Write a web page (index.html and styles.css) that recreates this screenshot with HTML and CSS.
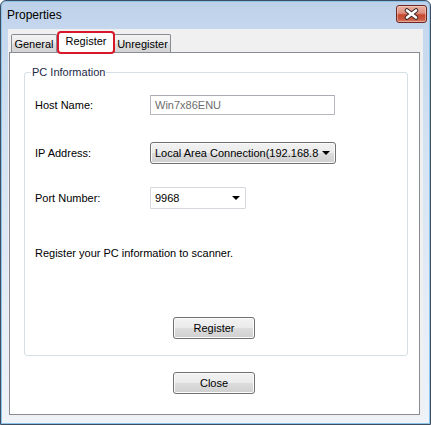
FILE: index.html
```html
<!DOCTYPE html>
<html>
<head>
<meta charset="utf-8">
<link rel="stylesheet" href="styles.css">
</head>
<body>
<div class="window">
  <div class="titlebar">
    <span class="title">Properties</span>
    <div class="close-x">
      <svg width="29" height="16" viewBox="0 0 29 16">
        <path d="M10 4.5 L19 11.5 M19 4.5 L10 11.5" stroke="#3b2a28" stroke-width="4.6" stroke-linecap="round" fill="none"/>
        <path d="M10 4.5 L19 11.5 M19 4.5 L10 11.5" stroke="#ffffff" stroke-width="2.6" stroke-linecap="round" fill="none"/>
      </svg>
    </div>
  </div>
  <div class="client">
    <div class="tabs">
      <div class="tab t-general">General</div>
      <div class="tab t-register active">Register</div>
      <div class="tab t-unregister">Unregister</div>
    </div>
    <div class="panel">
      <div class="group">
        <span class="legend">PC Information</span>
        <div class="row row-host">
          <span class="label">Host Name:</span>
          <div class="textbox">Win7x86ENU</div>
        </div>
        <div class="row row-ip">
          <span class="label">IP Address:</span>
          <div class="combo combo-ip"><span class="combo-text">Local Area Connection(192.168.8</span><span class="arrow"></span></div>
        </div>
        <div class="row row-port">
          <span class="label">Port Number:</span>
          <div class="combo combo-port"><span class="combo-text">9968</span><span class="arrow"></span></div>
        </div>
        <div class="message">Register your PC information to scanner.</div>
        <div class="btn btn-register">Register</div>
      </div>
      <div class="btn btn-close">Close</div>
    </div>
  </div>
</div>
</body>
</html>
```

FILE: styles.css
```css
html, body {
  margin: 0;
  padding: 0;
  background: #ffffff;
}
body {
  font-family: "Liberation Sans", Arial, sans-serif;
  font-size: 11px;
  color: #000;
}
.window {
  box-sizing: border-box;
  width: 431px;
  height: 425px;
  border: 1px solid #3e4d60;
  border-radius: 6px 6px 0 0;
  background: linear-gradient(180deg, #bcd0e9 0px, #c6d8ee 30px, #d6e3f2 160px, #e4ecf6 300px, #eef3f9 100%);
  box-shadow: inset 0 0 0 1px #8cc3ea;
  display: flex;
  flex-direction: column;
}
.titlebar {
  height: 28px;
  display: flex;
  align-items: center;
  padding-left: 6px;
  padding-right: 3px;
}
.title {
  font-size: 12px;
  color: #000;
  flex: 1;
}
.close-x {
  box-sizing: border-box;
  width: 31px;
  height: 18px;
  align-self: flex-start;
  margin-top: 4px;
  border: 1px solid #6c2a22;
  border-radius: 3px;
  background: linear-gradient(180deg, #eab2a4 0%, #dc8f7e 45%, #c9482f 55%, #c8553f 80%, #d8806a 100%);
  box-shadow: inset 0 0 0 1px rgba(255,220,210,0.45);
  display: flex;
  align-items: center;
  justify-content: center;
}
.close-x svg {
  display: block;
}
.client {
  box-sizing: border-box;
  margin: 0 7px;
  height: 388px;
  background: #f0f0f0;
  padding-left: 1px;
  display: flex;
  flex-direction: column;
}
.tabs {
  height: 23px;
  display: flex;
  align-items: flex-end;
  margin-left: 2px;
}
.tab {
  box-sizing: border-box;
  height: 18px;
  border: 1px solid #898c95;
  border-bottom: none;
  border-radius: 2px 2px 0 0;
  background: linear-gradient(180deg, #f3f3f3 0%, #ebebeb 45%, #dddddd 55%, #d3d3d3 100%);
  display: flex;
  align-items: center;
  justify-content: center;
  line-height: 13px;
  padding-top: 1px;
}
.t-general {
  width: 46px;
}
.t-register {
  width: 58px;
}
.t-unregister {
  width: 57px;
  margin-left: -1px;
}
.tab.active {
  position: relative;
  z-index: 1;
  height: 23px;
  margin-bottom: -2px;
  border: 2px solid #d9172a;
  border-radius: 4px;
  background: #ffffff;
  padding-top: 0;
  padding-bottom: 2px;
}
.panel {
  box-sizing: border-box;
  width: 411px;
  height: 363px;
  border: 1px solid #898c95;
  background: #ffffff;
  padding-left: 14px;
  padding-top: 19px;
}
.group {
  position: relative;
  box-sizing: border-box;
  width: 384px;
  height: 284px;
  border: 1px solid #d5dfe5;
  border-radius: 3px;
  padding-left: 10px;
  display: flex;
  flex-direction: column;
}
.legend {
  position: absolute;
  top: -7px;
  left: 6px;
  padding: 0 1px;
  line-height: 13px;
  background: #ffffff;
  color: #1c2845;
}
.row {
  display: flex;
  align-items: center;
}
.label {
  width: 115px;
  line-height: 13px;
}
.row-host {
  margin-top: 22px;
  height: 20px;
}
.row-ip {
  margin-top: 27px;
  height: 22px;
}
.row-port {
  margin-top: 23px;
  height: 22px;
}
.textbox {
  box-sizing: border-box;
  width: 185px;
  height: 20px;
  border: 1px solid #b5b8bf;
  border-top-color: #a9acb3;
  border-radius: 1px;
  padding-left: 4px;
  line-height: 18px;
  color: #6d6d6d;
}
.combo {
  box-sizing: border-box;
  height: 22px;
  display: flex;
  align-items: center;
  position: relative;
  padding-left: 4px;
  overflow: hidden;
}
.combo-ip {
  width: 186px;
  border: 1px solid #707070;
  border-radius: 3px;
  background: linear-gradient(180deg, #f2f2f2 0%, #ebebeb 50%, #dddddd 50%, #cfcfcf 100%);
  box-shadow: inset 0 0 0 1px #fbfbfb;
}
.combo-port {
  width: 96px;
  border: 1px solid #d6d8dd;
  border-radius: 1px;
  background: #ffffff;
}
.combo-text {
  flex: 1;
  white-space: nowrap;
  overflow: hidden;
  line-height: 13px;
}
.arrow {
  width: 0;
  height: 0;
  border-left: 4px solid transparent;
  border-right: 4px solid transparent;
  border-top: 4px solid #000;
  margin-left: 3px;
  margin-right: 5px;
  flex: none;
}
.message {
  margin-top: 38px;
  line-height: 13px;
}
.btn {
  box-sizing: border-box;
  width: 82px;
  height: 22px;
  border: 1px solid #707070;
  border-radius: 3px;
  background: linear-gradient(180deg, #f2f2f2 0%, #ebebeb 50%, #dddddd 50%, #cfcfcf 100%);
  box-shadow: inset 0 0 0 1px #fcfcfc;
  display: flex;
  align-items: center;
  justify-content: center;
  line-height: 13px;
}
.btn-register {
  margin-top: 57px;
  margin-left: 138px;
}
.btn-close {
  margin-top: 16px;
  margin-left: 149px;
}
```
